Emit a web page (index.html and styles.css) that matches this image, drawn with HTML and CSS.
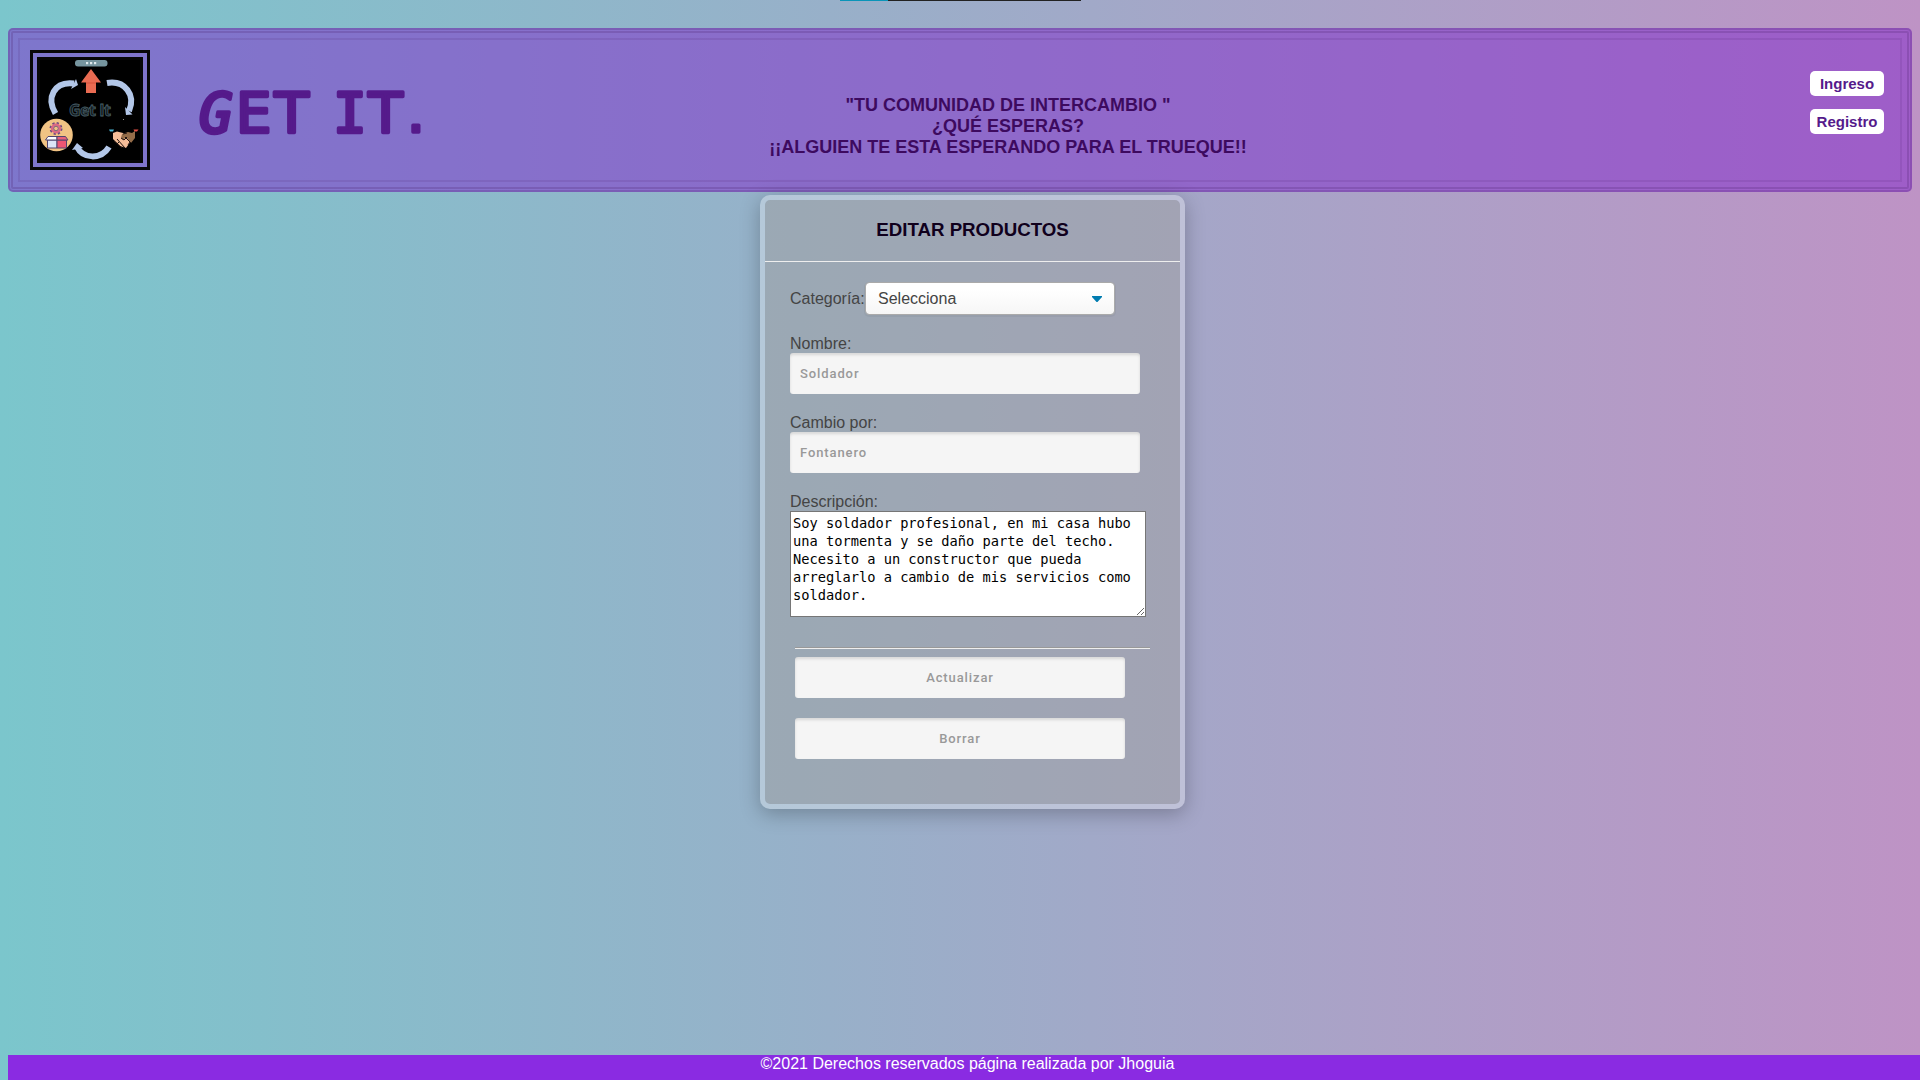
FILE: index.html
```html
<!DOCTYPE html>
<html lang="es">
<head>
<meta charset="utf-8">
<title>Get It - Editar productos</title>
<link rel="stylesheet" href="styles.css">
</head>
<body>
<div class="progress"><div class="progress-done"></div></div>
<header class="header">
  <svg class="logo" viewBox="0 0 100 100" role="img" aria-label="Get It">
    <rect width="100" height="100" fill="#000"/>
    <rect x="35" y="0" width="32.500" height="6.500" rx="3" fill="#76959f"/>
    <g fill="#dfe9ec"><rect x="46" y="2" width="2.200" height="2.200"/><rect x="50" y="2" width="2.200" height="2.200"/><rect x="54" y="2" width="2.200" height="2.200"/></g>
    <path d="M51 9 61 22.500H56V33H46V22.500H41Z" fill="#e96b52"/>
    <path d="M46 23h10" stroke="#d6533d" stroke-width="1"/>
    <g fill="none" stroke="#b3c7e8" stroke-width="6">
      <path d="M15.500 53.500C6 38 14 21 34 23.500"/>
      <path d="M67 23C85 20 96 35 89 51"/>
      <path d="M69 87C61 100 43 99 37 87"/>
    </g>
    <g fill="#b3c7e8"><path d="M36 19 38 25 31 29Z"/><path d="M85 47 92.500 54.500 86 55Z"/><path d="M37 83 43 88 32 90Z"/></g>
    <text x="29" y="56" textLength="42" class="logo-text">Get It</text>
    <circle cx="16.500" cy="75" r="16.300" fill="#f1c384"/>
    <g fill="none"><circle cx="16" cy="68.500" r="5.400" stroke="#6d4a80" stroke-width="2.200" stroke-dasharray="2.200 2.040"/><circle cx="16" cy="68.500" r="3.900" stroke="#db6785" stroke-width="2.400"/><circle cx="16" cy="68.500" r="2.300" stroke="#5c4279" stroke-width=".8"/></g>
    <g stroke="#51446f" stroke-width="1"><path d="M7.500 80H17V88H7.500Z" fill="#dce5f7"/><path d="M17 80H26.500V88H17Z" fill="#ed5673"/><path d="M8 76.500H17V80H5.500Z" fill="#fff"/><path d="M17 76.500H25.500L28 80H17Z" fill="#e8607a"/></g>
    <path d="M69 69.500h5l-1 2h-3Z" fill="#4db7d6"/><path d="M93.500 69.500h5l-1.500 2h-2.500Z" fill="#e34f45"/>
    <path d="M73 73 77 71.500 85 73.500 91 81 86 88 80 86 73 79Z" fill="#f5bd98"/>
    <path d="M82 74 88 72 92 73 95 71 95 78 91 83 86 77 83 80 81 78Z" fill="#956d49"/>
    <path d="M74 81 82 88M77 79 85 88M85 77 91 83M88 85 90 82M81 78 84 80 87 77M83 74 87 73M77 84 79 82" fill="none" stroke="#20130f" stroke-width="1"/>
    <circle cx="83.500" cy="59.500" r=".6" fill="#aaa"/>
  </svg>
  <svg class="brand" viewBox="0 0 232 60" role="img" aria-label="GET IT."><text class="brand-text" y="49"><tspan class="brand-slant" x="0">G</tspan><tspan x="37">E</tspan><tspan x="75.500">T</tspan> <tspan class="brand-mono" x="134">I</tspan><tspan x="169.500">T</tspan><tspan x="208">.</tspan></text></svg>
  <p class="tagline">"TU COMUNIDAD DE INTERCAMBIO "<br>¿QUÉ ESPERAS?<br>¡¡ALGUIEN TE ESTA ESPERANDO PARA EL TRUEQUE!!</p>
  <nav class="links"><a class="link">Ingreso</a><a class="link">Registro</a></nav>
</header>
<main class="card">
  <h1 class="card-title">EDITAR PRODUCTOS</h1>
  <form class="form">
    <div class="category"><span class="category-label">Categoría:</span><div class="select"><span>Selecciona</span><svg class="caret" viewBox="0 0 10 6"><path d="M0 0H10V1L5.500 6H4.500L0 1Z" fill="#007cb0"/></svg></div></div>
    <label class="field">Nombre:<input class="input" placeholder="Soldador"></label>
    <label class="field">Cambio por:<input class="input" placeholder="Fontanero"></label>
    <label class="field">Descripción:<textarea class="area" spellcheck="false">Soy soldador profesional, en mi casa hubo una tormenta y se daño parte del techo. Necesito a un constructor que pueda arreglarlo a cambio de mis servicios como soldador.</textarea></label>
    <div class="actions">
      <button class="input button" type="button">Actualizar</button>
      <button class="input button" type="button">Borrar</button>
    </div>
  </form>
</main>
<footer class="footer">©2021 Derechos reservados página realizada por Jhoguia</footer>
</body>
</html>
```

FILE: styles.css
```css
* { box-sizing: border-box; }
body {
  margin: 0;
  height: 1080px;
  overflow: hidden;
  display: flex;
  flex-direction: column;
  font: 16px/18px "Liberation Sans", Arial, sans-serif;
  background: linear-gradient(to right, #7bc6cc, #be93c5);
}
.progress { width: 241px; height: 1px; margin: 0 0 27px 840px; background: #222; }
.progress-done { width: 48px; height: 1px; background: #0a94b8; }
.header {
  flex: none;
  display: flex;
  align-items: flex-start;
  height: 164px;
  margin: 0 8px;
  padding: 17px 23px 0 17px;
  border: 5px double rgba(75, 30, 110, .22);
  border-radius: 5px;
  outline: 2px solid rgba(75, 30, 110, .13);
  outline-offset: -12px;
  background: rgba(128, 40, 204, .5);
}
.logo { flex: none; width: 120px; height: 120px; border: 10px double #080808; }
.logo-text { font: bold 16px "Open Sans", sans-serif; fill: #10191d; stroke: #4a6069; stroke-width: .8px; }
.brand { flex: none; width: 232px; height: 60px; margin: 33px 0 0 49px; overflow: visible; }
.brand-text { font: 56px "DejaVu Sans", sans-serif; fill: #551a8b; stroke: #551a8b; stroke-width: 3.500px; stroke-linejoin: round; }
.brand-slant { font-family: "DejaVu Sans Mono", monospace; font-style: oblique; }
.brand-mono { font-family: "DejaVu Sans Mono", monospace; }
.tagline { width: 500px; margin: 45px 0 0 327px; text-align: center; font-size: 18px; font-weight: bold; line-height: 21px; color: #3d0a5f; }
.links { display: flex; flex-direction: column; gap: 13px; width: 74px; margin: 21px 0 0 auto; }
.link { height: 25px; border-radius: 5px; background: #fff; color: #551a8b; text-align: center; font-size: 15px; font-weight: bold; line-height: 25px; }
.card {
  flex: none;
  width: 425px;
  height: 614px;
  margin: 3px 0 0 760px;
  border: 5px solid rgba(255, 255, 255, .3);
  border-radius: 10px;
  background: rgba(160, 160, 160, .5);
  background-clip: padding-box;
  box-shadow: 0 5px 20px rgba(0, 0, 0, .25);
}
.card-title { height: 62px; margin: 0; padding-top: 19px; border-bottom: 1px solid #eee; text-align: center; font-size: 18.720px; line-height: 21px; color: #10001c; }
.form { padding: 20px 25px 0; color: #444; }
.category { display: flex; align-items: center; height: 33px; margin-bottom: 20px; }
.category-label { width: 75px; }
.select { display: flex; align-items: center; justify-content: space-between; width: 250px; height: 33px; padding: 0 12px; border: 1px solid #aaa; border-radius: 4px; background: linear-gradient(#fff 20%, #f6f6f6); background-clip: padding-box; box-shadow: 0 1px 0 1px rgba(0, 0, 0, .04); }
.caret { width: 10px; height: 6px; }
.field { display: block; margin-bottom: 20px; }
.input { display: block; width: 350px; height: 41px; padding: 0 10px; border: 0; border-radius: 3px; background: #f5f5f5; box-shadow: inset 0 2px 3px rgba(0, 0, 0, .12); color: #999; font: 500 13px Roboto, sans-serif; letter-spacing: .9px; }
.input::placeholder { color: #999; }
.area { display: block; width: 356px; height: 106px; padding: 2px; border: 1px solid #767676; background: #fff; color: #000; font: 13.700px/18px "DejaVu Sans Mono", monospace; }
.actions { width: 355px; margin: 30px 0 0 5px; padding-top: 9px; border-top: 1px solid #999; box-shadow: inset 0 1px 0 #eee; display: grid; gap: 20px; }
.button { width: 330px; }
.footer { flex: none; height: 25px; margin: auto 0 0 8px; padding: 0 0 0 7px; background: #8a2be2; color: #fff; text-align: center; }
```
